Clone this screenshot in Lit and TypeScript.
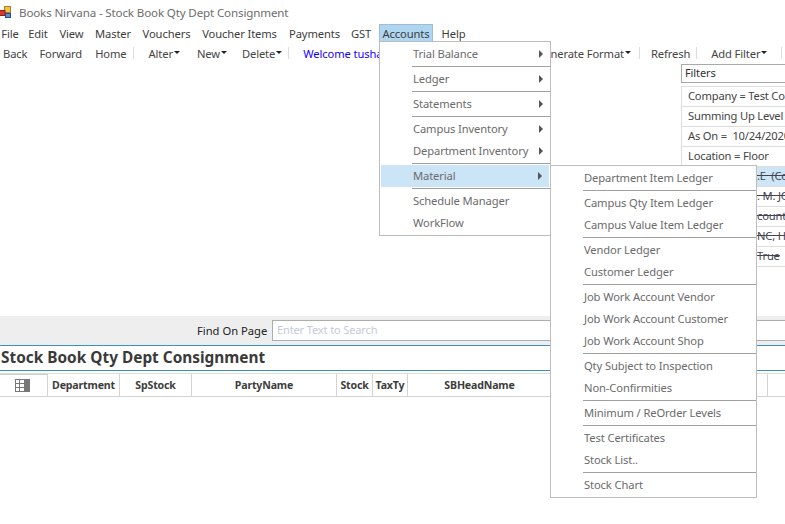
import { LitElement, html, css } from "lit";
import { customElement } from "lit/decorators.js";

type Entry = { t: string; arrow?: boolean; sep?: boolean; hi?: boolean };

const accounts: Entry[] = [
  { t: "Trial Balance", arrow: true },
  { t: "Ledger", arrow: true, sep: true },
  { t: "Statements", arrow: true, sep: true },
  { t: "Campus Inventory", arrow: true, sep: true },
  { t: "Department Inventory", arrow: true },
  { t: "Material", arrow: true, sep: true, hi: true },
  { t: "Schedule Manager", sep: true },
  { t: "WorkFlow" },
];
const material: Entry[] = [
  { t: "Department Item Ledger" },
  { t: "Campus Qty Item Ledger", sep: true },
  { t: "Campus Value Item Ledger" },
  { t: "Vendor Ledger", sep: true },
  { t: "Customer Ledger" },
  { t: "Job Work Account Vendor", sep: true },
  { t: "Job Work Account Customer" },
  { t: "Job Work Account Shop" },
  { t: "Qty Subject to Inspection", sep: true },
  { t: "Non-Confirmities" },
  { t: "Minimum / ReOrder Levels", sep: true },
  { t: "Test Certificates", sep: true },
  { t: "Stock List.." },
  { t: "Stock Chart", sep: true },
];
const menus: [string, number][] = [
  ["File", 20], ["Edit", 36], ["View", 31], ["Master", 52], ["Vouchers", 55],
  ["Voucher Items", 91], ["Payments", 59], ["GST", 34], ["Accounts", 54], ["Help", 41],
];
const filters = ["Company = Test Co", "Summing Up Level", "As On =  10/24/2020", "Location = Floor"];
const struck = [".E  (Co", ". M. JC", "counts", "NC, H", "True"];
const cols: [string, number][] = [
  ["Department", 72], ["SpStock", 72], ["PartyName", 145], ["Stock", 36], ["TaxTy", 35], ["SBHeadName", 144],
  ["", 72], ["", 72], ["", 72],
];

@customElement("app-root")
export class AppRoot extends LitElement {
  static styles = css`
    :host { display: block; width: 785px; height: 524px; overflow: hidden; position: relative; background: #fff;
      font-family: "Noto Sans", sans-serif; font-size: 11.2px; letter-spacing: -0.12px; color: #444; }
    .title { height: 24px; display: flex; align-items: center; gap: 7px; font-size: 11.6px; letter-spacing: -0.15px; color: #6d6d6d; }
    .title svg { flex: none; }
    .menubar { height: 20px; display: flex; color: #3d3d3d; }
    .menubar span { height: 20px; line-height: 19px; flex: none; box-sizing: border-box; text-align: center; }
    .menubar .open { background: #aed6f1; border: 1px solid #9fbcd0; border-bottom: none; line-height: 17px; height: 18px; }
    .toolbar { height: 20px; display: flex; align-items: center; padding-bottom: 2px; box-sizing: border-box; color: #444; white-space: nowrap; overflow: hidden; }
    .toolbar > * { flex: none; }
    .caret { display: inline-block; width: 0; height: 0; border: 3px solid transparent; border-top: 3px solid #222; border-bottom: none; margin-left: 1px; vertical-align: 4px; }
    .bar { width: 1px; height: 12px; background: #ddd; }
    .welcome { color: #1500ff; width: 233px; }
    .stage { height: 252px; display: flex; justify-content: flex-end; }
    .filters { width: 104px; flex: none; }
    .fhead { height: 19px; box-sizing: border-box; border: 1px solid #a9a9a9; border-right: none; line-height: 16px; padding-left: 3px; font-size: 11px; color: #333; }
    .flist { margin-top: 3px; border: 1px solid #ddd; border-right: none; letter-spacing: -0.2px; }
    .flist div { height: 19px; line-height: 18px; border-bottom: 1px solid #ddd; padding-left: 6px; white-space: pre; overflow: hidden; }
    .flist div:last-child { border-bottom: none; }
    .flist .s { text-decoration: line-through; color: #445; padding-left: 75px; }
    .flist .s1 { background: #cde6f7; }
    .find { height: 29px; background: #eeeeee; padding-top: 4px; box-sizing: border-box; display: flex; color: #222; }
    .find label { margin-left: 197px; width: 75px; flex: none; line-height: 21px; letter-spacing: 0; }
    .find .box { width: 530px; height: 21px; box-sizing: border-box; background: #fff; border: 1px solid #acacac; padding-left: 4px; line-height: 18px; font-size: 11px; color: #c3cbd8; flex: none; }
    .rep { height: 26px; box-sizing: border-box; border-top: 1px solid #3a8fcf; border-bottom: 1px solid #3a8fcf; font-weight: 700; font-size: 15.4px; letter-spacing: 0; line-height: 23px; padding-left: 1px; color: #3a3a3a; white-space: nowrap; }
    .grid { display: flex; height: 24px; margin-top: 2px; border-top: 1px solid #ddd; border-bottom: 1px solid #d4d4d4; box-sizing: border-box; font-weight: 700; font-size: 10.6px; letter-spacing: -0.17px; color: #3d3d3d; }
    .grid .c { flex: none; box-sizing: border-box; border-right: 1px solid #d4d4d4; text-align: center; line-height: 22px; white-space: nowrap; overflow: hidden; }
    .grid .ic { width: 48px; display: flex; align-items: center; padding-left: 15px; border-top: 1px solid #ccc; }
    .menu { position: absolute; background: #fff; border: 1px solid #bdbdbd; box-sizing: border-box; color: #6b6b6b; }
    .m1 { left: 379px; top: 41px; width: 172px; height: 195px; padding-top: 1px; }
    .m2 { left: 550px; top: 165px; width: 207px; height: 333px; padding-top: 1px; }
    .item { position: relative; height: 22px; line-height: 22px; padding-left: 33px; white-space: nowrap; }
    .item.hi { background: #cbe4f6; margin: 0 1px; padding-left: 32px; }
    .sep { height: 1px; background: #a0a0a0; margin: 1px 0 1px 32px; }
    .arrow { position: absolute; right: 7px; top: 7px; width: 0; height: 0; border: 4px solid transparent; border-left: 4px solid #555; border-right: none; }
  `;

  private menuList(items: Entry[]) {
    return items.map((e) => html`${e.sep ? html`<div class="sep"></div>` : ""}<div class="item ${e.hi ? "hi" : ""}">${e.t}${e.arrow ? html`<i class="arrow"></i>` : ""}</div>`);
  }

  render() {
    return html`
      <div class="title">
        <svg width="12" height="14" viewBox="0 0 12 14">
          <rect x="4.500" y="1.500" width="6" height="6" fill="#f4c040" stroke="#a87f20"/>
          <rect x="-1" y="5.500" width="6" height="5" fill="#d63a2a" stroke="#8a2018"/>
          <rect x="5.500" y="8.500" width="5" height="4" fill="#5a8ed5" stroke="#20508a"/>
        </svg>
        <span>Books Nirvana - Stock Book Qty Dept Consignment</span>
      </div>
      <div class="menubar">
        ${menus.map(([m, w]) => html`<span class="${m === "Accounts" ? "open" : ""}" style="width:${w}px;${m === "Accounts" ? "margin-left:1px" : ""}">${m}</span>`)}
      </div>
      <div class="toolbar">
        <span style="margin-left:3px">Back</span>
        <span style="margin-left:12px">Forward</span>
        <span style="margin-left:13px">Home</span>
        <i class="bar" style="margin-left:7px"></i>
        <span style="margin-left:14px">Alter<i class="caret"></i></span>
        <span style="margin-left:17px">New<i class="caret"></i></span>
        <span style="margin-left:15px">Delete<i class="caret"></i></span>
        <i class="bar" style="margin-left:6px"></i>
        <span class="welcome" style="margin-left:14px">Welcome tushar</span>
        <span>Generate Format<i class="caret"></i></span>
        <i class="bar" style="margin-left:8px"></i>
        <span style="margin-left:11px">Refresh</span>
        <i class="bar" style="margin-left:6px"></i>
        <span style="margin-left:14px">Add Filter<i class="caret"></i></span>
        <i class="bar" style="margin-left:14px"></i>
      </div>
      <div class="stage">
        <div class="filters">
          <div class="fhead">Filters</div>
          <div class="flist">
            ${filters.map((f) => html`<div>${f}</div>`)}
            ${struck.map((f, i) => html`<div class="s ${i === 0 ? "s1" : ""}">${f}</div>`)}
          </div>
        </div>
      </div>
      <div class="find">
        <label>Find On Page</label>
        <div class="box">Enter Text to Search</div>
      </div>
      <div class="rep">Stock Book Qty Dept Consignment</div>
      <div class="grid">
        <div class="c ic">
          <svg width="15" height="13" viewBox="0 0 15 13">
            <rect x="0" y="0" width="15" height="13" fill="#777"/>
            <path d="M1 1h3v3H1zM5 1h4v3H5zM1 5h3v3H1zM5 5h4v3H5zM1 9h3v3H1zM5 9h4v3H5z" fill="#fff"/>
          </svg>
        </div>
        ${cols.map(([c, w]) => html`<div class="c" style="width:${w}px">${c}</div>`)}
      </div>
      <div class="menu m1">${this.menuList(accounts)}</div>
      <div class="menu m2">${this.menuList(material)}</div>
    `;
  }
}
